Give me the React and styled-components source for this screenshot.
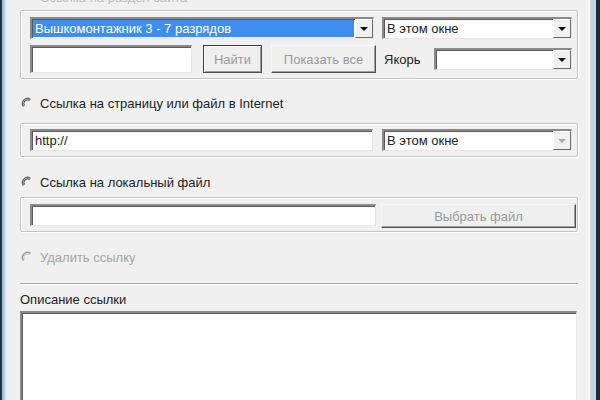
import React from 'react';
import styled, { createGlobalStyle } from 'styled-components';

const GlobalStyle = createGlobalStyle`
  html, body {
    margin: 0;
    padding: 0;
    background: #f0f0f0;
  }
  body {
    font-family: "Liberation Sans", Arial, sans-serif;
    font-size: 13px;
    color: #222;
  }
`;

const Window = styled.div`
  display: flex;
  width: 600px;
  height: 400px;
  overflow: hidden;
`;

const FrameLeft = styled.div`
  width: 7px;
  flex-shrink: 0;
  background: linear-gradient(to right, #1d3347 0, #1d3347 2px, #9fbbd4 2px, #b7cde0 5px, #e6ecf1 5px);
`;

const FrameRight = styled.div`
  width: 12px;
  flex-shrink: 0;
  background: linear-gradient(to right, #f7f7f7 0, #f7f7f7 2px, #dcdcdc 2px, #dcdcdc 3px, #b8cfe3 3px, #c9dbea 8px, #1b2a36 8px);
`;

const Panel = styled.div`
  flex: 1;
  display: flex;
  flex-direction: column;
  padding: 0 10px 0 13px;
  background: #f0f0f0;
`;

const CutCaption = styled.div`
  height: 4px;
  overflow: hidden;
  padding-left: 20px;
  color: #bdbdbd;
  line-height: 13px;

  span {
    display: block;
    margin-top: -9px;
  }
`;

const GroupBox = styled.div`
  display: flex;
  flex-direction: column;
  gap: ${p => p.$gap ?? 0}px;
  margin-top: ${p => p.$top}px;
  padding: ${p => p.$pad};
  border: 1px solid #c4c4c4;
  border-radius: 2px;
  box-shadow: inset 1px 1px 0 #fff, 1px 1px 0 #fff;
`;

const Row = styled.div`
  display: flex;
  align-items: center;
  gap: ${p => p.$gap ?? 8}px;
  height: ${p => p.$h}px;
`;

const Sunken = styled.div`
  display: flex;
  align-items: stretch;
  box-sizing: border-box;
  height: ${p => p.$h || 22}px;
  width: ${p => (p.$w ? `${p.$w}px` : 'auto')};
  flex: ${p => (p.$w ? '0 0 auto' : '1')};
  min-width: 0;
  background: #fff;
  border-top: 2px solid #8a8a8a;
  border-left: 2px solid #8a8a8a;
  border-bottom: 1px solid #e6e6e6;
  border-right: 1px solid #e6e6e6;
  box-shadow: inset 1px 1px 0 #5a5a5a;
`;

const ComboText = styled.div`
  flex: 1;
  display: flex;
  align-items: center;
  padding-left: 2px;
  margin: 1px;
  white-space: nowrap;
  overflow: hidden;
  color: ${p => (p.$selected ? '#fff' : '#222')};
  background: ${p => (p.$selected ? '#3d8ef0' : 'transparent')};
`;

const ArrowButton = styled.div`
  width: 16px;
  flex-shrink: 0;
  display: flex;
  align-items: center;
  justify-content: center;
  background: #f0f0f0;
  border-left: 1px solid #fff;
  border-top: 1px solid #fff;
  border-right: 1px solid #6b6b6b;
  border-bottom: 1px solid #6b6b6b;

  &::after {
    content: '';
    border-left: 4px solid transparent;
    border-right: 4px solid transparent;
    border-top: 4px solid ${p => (p.$disabled ? '#a8a8a8' : '#111')};
  }
`;

const Button = styled.div`
  box-sizing: border-box;
  height: ${p => p.$h}px;
  width: ${p => p.$w}px;
  flex-shrink: 0;
  margin-left: ${p => p.$ml || 0}px;
  display: flex;
  align-items: center;
  justify-content: center;
  color: #9a9a9a;
  background: #efefef;
  border: 1px solid ${p => (p.$default ? '#3b3b3b' : '#f8f8f8')};
  border-right-color: #505050;
  border-bottom-color: #505050;
  box-shadow: ${p => (p.$default ? 'inset 1px 1px 0 #fff, inset -1px -1px 0 #9a9a9a' : 'inset -1px -1px 0 #a0a0a0')};
`;

const FieldLabel = styled.span`
  width: ${p => p.$w}px;
  margin-left: ${p => p.$ml || 0}px;
  flex-shrink: 0;
  white-space: nowrap;
  color: #222;
`;

const RadioRow = styled.label`
  display: flex;
  align-items: center;
  gap: 7px;
  height: 18px;
  margin-top: ${p => p.$top}px;
  padding-left: 1px;
  color: ${p => (p.$disabled ? '#a5a5a5' : '#222')};
  white-space: nowrap;
`;

const Separator = styled.div`
  margin-top: 17px;
  height: 0;
  border-top: 1px solid #a8a8a8;
  border-bottom: 1px solid #fff;
`;

const Caption = styled.div`
  margin-top: 7px;
  height: 16px;
  line-height: 16px;
  color: #222;
`;

const TextArea = styled.div`
  flex: 1;
  margin-top: 3px;
  margin-right: 1px;
  background: #fff;
  border-top: 2px solid #8a8a8a;
  border-left: 2px solid #8a8a8a;
  border-right: 1px solid #e6e6e6;
  box-shadow: inset 1px 1px 0 #5a5a5a;
`;

const RadioIcon = ({ disabled }) => (
  <svg width="12" height="12" viewBox="0 0 12 12">
    <path d="M2.5 9.5 A5 5 0 0 1 9.5 2.5" fill="none" stroke={disabled ? '#9a9a9a' : '#6a6a6a'} strokeWidth="1.4" />
    <path d="M3.4 8.6 A3.8 3.8 0 0 1 8.6 3.4" fill="none" stroke={disabled ? '#c4c4c4' : '#3a3a3a'} strokeWidth="1" />
  </svg>
);

const Combo = ({ text, selected, disabled, w }) => (
  <Sunken $w={w}>
    <ComboText $selected={selected}>{text}</ComboText>
    <ArrowButton $disabled={disabled} />
  </Sunken>
);

export default function App() {
  return (
    <>
      <GlobalStyle />
      <Window>
        <FrameLeft />
        <Panel>
          <CutCaption><span>Ссылка на раздел сайта</span></CutCaption>

          <GroupBox $top={6} $gap={6} $pad="6px 5px 5px 9px">
            <Row $h={22} $gap={8}>
              <Combo w={344} text="Вышкомонтажник 3 - 7 разрядов" selected />
              <Combo text="В этом окне" />
            </Row>
            <Row $h={28} $gap={0}>
              <Sunken $w={162} $h={28} />
              <Button $w={59} $h={28} $ml={11} $default>Найти</Button>
              <Button $w={105} $h={28} $ml={9}>Показать все</Button>
              <FieldLabel $w={50} $ml={8}>Якорь</FieldLabel>
              <Combo />
            </Row>
          </GroupBox>

          <RadioRow $top={15}>
            <RadioIcon />
            Ссылка на страницу или файл в Internet
          </RadioRow>

          <GroupBox $top={11} $pad="5px 5px 5px 9px">
            <Row $h={22} $gap={9}>
              <Sunken $w={343}>
                <ComboText>http://</ComboText>
              </Sunken>
              <Combo text="В этом окне" disabled />
            </Row>
          </GroupBox>

          <RadioRow $top={16}>
            <RadioIcon />
            Ссылка на локальный файл
          </RadioRow>

          <GroupBox $top={6} $pad="6px 1px 3px 9px">
            <Row $h={24} $gap={5}>
              <Sunken $h={22} style={{ alignSelf: 'flex-start' }} />
              <Button $w={195} $h={24}>Выбрать файл</Button>
            </Row>
          </GroupBox>

          <RadioRow $top={16} $disabled>
            <RadioIcon disabled />
            Удалить ссылку
          </RadioRow>

          <Separator />
          <Caption>Описание ссылки</Caption>
          <TextArea />
        </Panel>
        <FrameRight />
      </Window>
    </>
  );
}
